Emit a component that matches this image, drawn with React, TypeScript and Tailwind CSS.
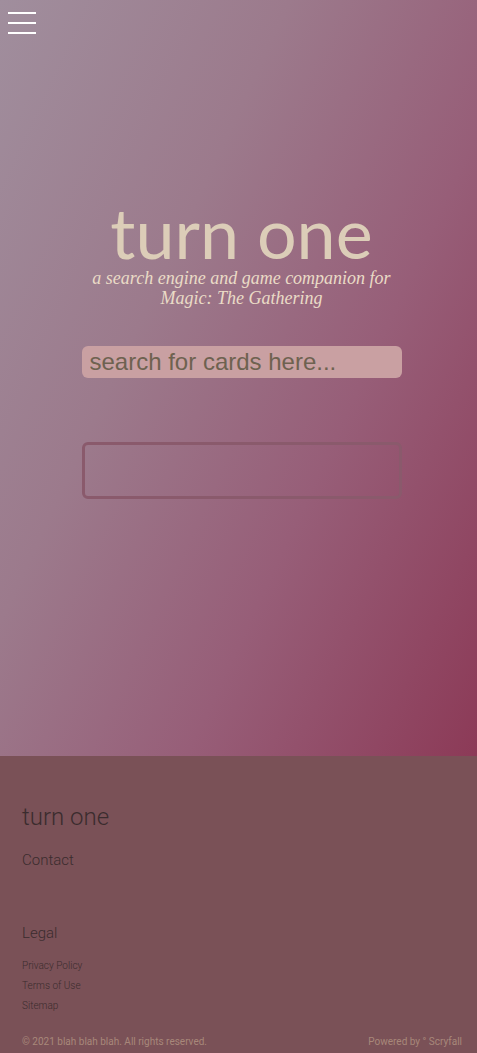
import React from "react";

export default function App() {
  return (
    <div className="w-full" style={{ fontFamily: "Roboto, sans-serif" }}>
      <div className="relative h-[756px] bg-[linear-gradient(115deg,#a08e9d_0%,#9c7a8c_35%,#975e78_65%,#8c3a57_100%)]">
        <button className="absolute left-[8px] top-[12px] flex w-[28px] flex-col gap-[8px]">
          <span className="block h-[2px] w-[28px] bg-white" />
          <span className="block h-[2px] w-[28px] bg-white" />
          <span className="block h-[2px] w-[28px] bg-white" />
        </button>
        <div className="flex flex-col items-center pl-[6px] pt-[200px]">
          <h1
            className="text-[70px] leading-[64px] text-[#dccdb8]"
            style={{ fontFamily: "Lato, sans-serif" }}
          >
            turn one
          </h1>
          <p
            className="mt-[4px] text-center text-[18px] italic leading-[20px] text-[#eadbc6]"
            style={{ fontFamily: "'Liberation Serif', serif" }}
          >
            a search engine and game companion for
            <br />
            Magic: The Gathering
          </p>
          <input
            className="mt-[38px] h-[32px] w-[320px] rounded-[6px] bg-[#c9a0a2] px-[8px] text-[24px] text-[#6e6250] outline-none placeholder:text-[#6e6250]"
            style={{ fontFamily: "'Liberation Sans', Arial, sans-serif" }}
            placeholder="search for cards here..."
          />
          <div className="mt-[64px] h-[57px] w-[320px] rounded-[6px] border-[3px] border-[#8a5a6c]" />
        </div>
      </div>
      <footer className="h-[297px] bg-[#7a5157] pl-[22px] pr-[15px] pt-[46px] text-[#3a2c2e]">
        <div className="text-[24px] font-light leading-[30px]">turn one</div>
        <div className="mt-[18px] text-[15px] font-light leading-[20px]">Contact</div>
        <div className="mt-[53px] text-[15px] font-light leading-[20px]">Legal</div>
        <div className="mt-[13px] flex flex-col text-[10px] font-light leading-[20px]">
          <span>Privacy Policy</span>
          <span>Terms of Use</span>
          <span>Sitemap</span>
        </div>
        <div className="mt-[19px] flex justify-between text-[10px] leading-[14px] text-[#a8887a]">
          <span>© 2021 blah blah blah. All rights reserved.</span>
          <span>Powered by ° Scryfall</span>
        </div>
      </footer>
    </div>
  );
}
